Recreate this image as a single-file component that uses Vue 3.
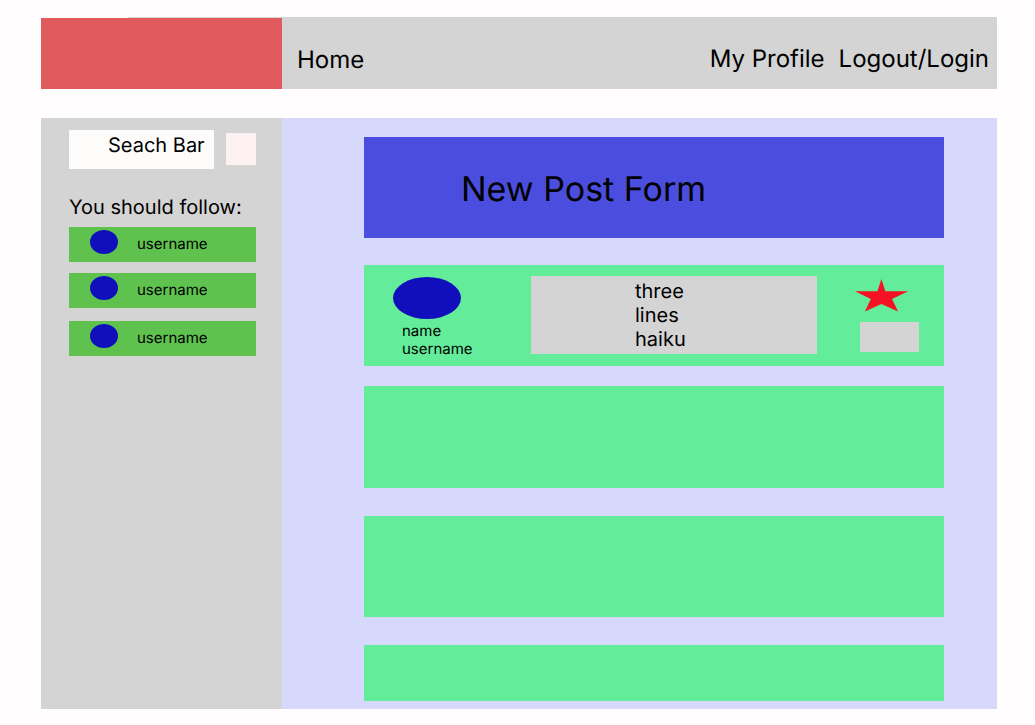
<script setup>
import { ref } from 'vue'

const query = ref('')
const suggestions = ref([
  { id: 1, username: 'username' },
  { id: 2, username: 'username' },
  { id: 3, username: 'username' },
])
const haiku = ['three', 'lines', 'haiku']
</script>

<template>
  <div class="page">
    <header class="topbar">
      <div class="logo"></div>
      <nav class="nav">
        <a class="home" href="#home">Home</a>
        <div class="account">
          <a href="#profile">My Profile</a>
          <a href="#session">Logout/Login</a>
        </div>
      </nav>
    </header>

    <div class="columns">
      <aside class="sidebar">
        <form class="search" @submit.prevent>
          <input v-model="query" type="text" aria-label="Search" placeholder="Seach Bar" />
          <button type="submit" aria-label="Submit search"></button>
        </form>
        <h2>You should follow:</h2>
        <ul class="people">
          <li v-for="person in suggestions" :key="person.id">
            <span class="dot"></span>
            <span>{{ person.username }}</span>
          </li>
        </ul>
      </aside>

      <main class="feed">
        <section class="new-post">
          <h1>New Post Form</h1>
        </section>

        <article class="post first">
          <div class="author">
            <div class="avatar"></div>
            <p>name<br />username</p>
          </div>
          <div class="haiku">
            <p v-for="line in haiku" :key="line">{{ line }}</p>
          </div>
          <div class="actions">
            <button class="star" type="button" aria-label="Favourite">
              <svg width="54" height="33" viewBox="0 0 54 33" aria-hidden="true">
                <path
                  fill="#f61222"
                  d="M26.4 0L30.4 12.3H53.2L37 20L43.1 32.6L26.4 25L9.9 32.6L15.8 20L0 12.3H22.4Z"
                />
              </svg>
            </button>
            <button class="more" type="button" aria-label="More"></button>
          </div>
        </article>
        <article class="post second"></article>
        <article class="post"></article>
        <article class="post last"></article>
      </main>
    </div>
  </div>
</template>

<style>
body {
  background: #fffdfe;
}
</style>

<style scoped>
.page {
  box-sizing: border-box;
  min-height: 100vh;
  padding: 17px 38px 16px 41px;
  display: flex;
  flex-direction: column;
  gap: 29px;
  font-family: Inter, "Liberation Sans", sans-serif;
  text-rendering: geometricPrecision;
  color: #000;
}
h1,
h2,
p,
ul {
  margin: 0;
  padding: 0;
  font-weight: 400;
}
a {
  color: inherit;
  text-decoration: none;
}
button {
  border: 0;
  padding: 0;
  cursor: pointer;
}
.topbar {
  display: flex;
  min-height: 72px;
  background: linear-gradient(to right, transparent 87px, #d4d4d4 87px);
}
.logo {
  flex: 0 0 241px;
  margin-top: 1px;
  background: #e15a5e;
}
.nav {
  flex: 1;
  display: flex;
  align-items: center;
  justify-content: space-between;
  padding: 12px 8px 0 15px;
  font-size: 24px;
  line-height: 30px;
}
.home {
  padding-top: 2px;
}
.account {
  display: flex;
  gap: 14px;
}
.columns {
  flex: 1;
  display: flex;
}
.sidebar {
  box-sizing: border-box;
  flex: 0 0 241px;
  min-width: 0;
  padding: 12px 26px 12px 28px;
  background: #d4d4d4;
}
.search {
  display: flex;
  align-items: flex-start;
  gap: 12px;
}
.search input {
  box-sizing: border-box;
  flex: 1;
  min-width: 0;
  height: 39px;
  border: 0;
  border-radius: 0;
  padding: 0 4px 9px 39px;
  background: #fdfcfa;
  font: 20px Inter, "Liberation Sans", sans-serif;
  text-rendering: inherit;
  color: #000;
}
.search input::placeholder {
  color: #000;
  opacity: 1;
}
.search button {
  width: 30px;
  height: 32px;
  margin-top: 3px;
  background: #fdf2f1;
}
.sidebar h2 {
  margin: 26px 0 8px;
  font-size: 20px;
  line-height: 24px;
}
.people {
  display: grid;
  gap: 11px;
  list-style: none;
}
.people li {
  box-sizing: border-box;
  display: flex;
  align-items: flex-start;
  gap: 19px;
  min-height: 35px;
  padding: 3px 8px 8px 21px;
  background: #5fc24f;
  font-size: 15px;
  line-height: 28px;
}
.people li:last-child {
  margin-top: 2px;
}
.dot {
  width: 28px;
  height: 24px;
  border-radius: 50%;
  background: #100fbb;
}
.people li span:last-child {
  height: 24px;
}
.feed {
  flex: 1;
  display: flex;
  flex-direction: column;
  gap: 28px;
  padding: 19px 53px 8px 82px;
  background: #d6d9fc;
}
.new-post {
  box-sizing: border-box;
  min-height: 101px;
  padding: 30px 20px 20px 97px;
  background: #4a4ddd;
}
h1 {
  font-size: 34px;
  line-height: 46px;
}
.post {
  box-sizing: border-box;
  min-height: 101px;
  background: #63ed9a;
}
.first {
  display: flex;
  align-items: flex-start;
  margin-top: -1px;
  padding: 11px 25px 8px 29px;
}
.second {
  margin-top: -8px;
  min-height: 102px;
}
.last {
  flex: 1;
  min-height: 56px;
}
.author {
  flex: 0 0 138px;
  padding-top: 1px;
  font-size: 15px;
  line-height: 18px;
}
.author p {
  padding: 3px 0 0 9px;
}
.avatar {
  width: 68px;
  height: 42px;
  border-radius: 50%;
  background: #100fbb;
}
.haiku {
  box-sizing: border-box;
  flex: 1;
  min-height: 78px;
  padding: 3px 20px 3px 104px;
  background: #d4d4d4;
  font-size: 20px;
  line-height: 24px;
}
.actions {
  display: flex;
  flex-direction: column;
  align-items: flex-end;
  flex: 0 0 102px;
  gap: 10px;
  padding-top: 3px;
}
.star {
  width: 54px;
  height: 33px;
  margin-right: 10px;
  background: none;
}
.star svg {
  display: block;
}
.more {
  width: 59px;
  height: 30px;
  background: #d4d4d4;
}
</style>
